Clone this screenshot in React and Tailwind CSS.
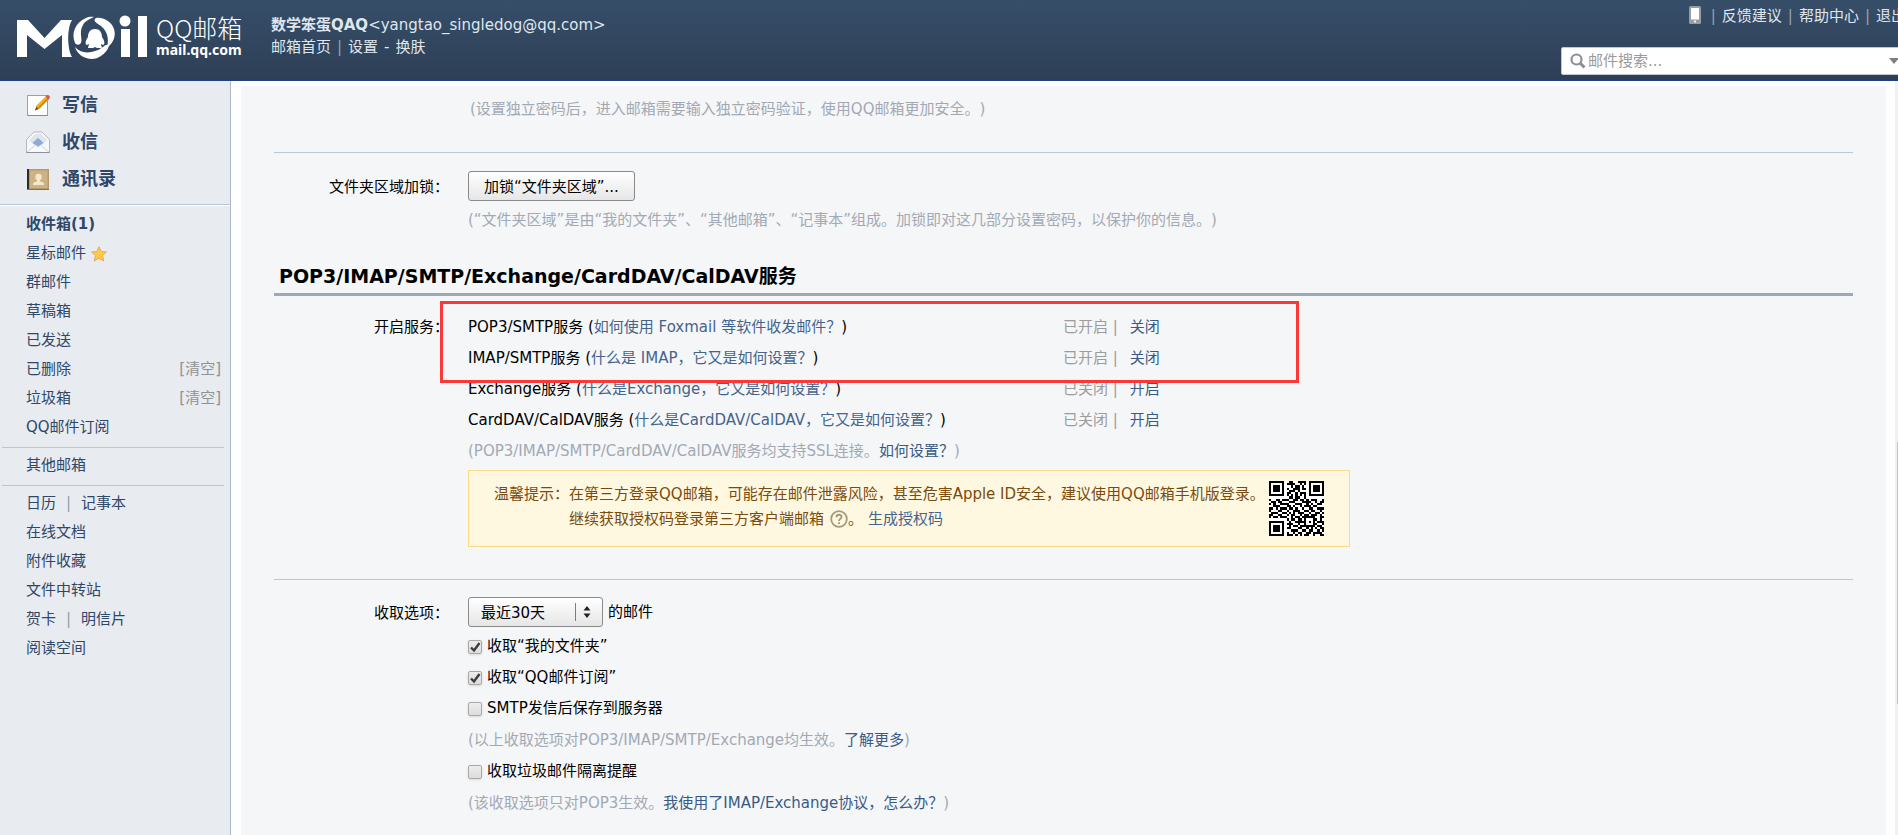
import { useState } from 'react';

const folders = [
  { name: '收件箱(1)', bold: true },
  { name: '星标邮件', star: true },
  { name: '群邮件' },
  { name: '草稿箱' },
  { name: '已发送' },
  { name: '已删除', clearable: true },
  { name: '垃圾箱', clearable: true },
  { name: 'QQ邮件订阅' }
];

const tools = [
  ['日历', '记事本'],
  ['在线文档'],
  ['附件收藏'],
  ['文件中转站'],
  ['贺卡', '明信片'],
  ['阅读空间']
];

const services = [
  { name: 'POP3/SMTP服务', help: '如何使用 Foxmail 等软件收发邮件？', on: true },
  { name: 'IMAP/SMTP服务', help: '什么是 IMAP，它又是如何设置？', on: true },
  { name: 'Exchange服务', help: '什么是Exchange，它又是如何设置？', on: false },
  { name: 'CardDAV/CalDAV服务', help: '什么是CardDAV/CalDAV，它又是如何设置？', on: false }
];

// 1 = dark module
const qrRows = [
  '1111111001100111101111111',
  '1000001011110010101000001',
  '1011101000101101001011101',
  '1011101010011101101011101',
  '1011101001110100001011101',
  '1000001011001011101000001',
  '1111111010101010101111111',
  '0000000001101100100000000',
  '1001101110011011010111001',
  '0110110001110001111001011',
  '1010011110001110010100110',
  '0011100011010010111011000',
  '1101011101101001001100111',
  '1000110010011100110110010',
  '0111001101010111001001101',
  '1100110010110010110111010',
  '1011011100101101111110011',
  '0000000010110110100011010',
  '1111111001001111101010111',
  '1000001011100100100011001',
  '1011101001011011111110110',
  '1011101011000110010101011',
  '1011101000111001101100101',
  '1000001010010110011011110',
  '1111111011101010110010011'
];

function QrCode() {
  return (
    <svg viewBox="0 0 25 25" className="h-[55px] w-[55px]" shapeRendering="crispEdges">
      <rect width="25" height="25" fill="#fff" />
      {qrRows.map((row, y) =>
        row.split('').map((cell, x) =>
          cell === '1' ? <rect key={`${x}-${y}`} x={x} y={y} width="1" height="1" fill="#000" /> : null
        )
      )}
    </svg>
  );
}

function Logo() {
  return (
    <svg viewBox="0 0 132 46" className="h-[46px] w-[132px]" fill="#fff">
      <path d="M0 6H11L27.500 24L44 6H55C50 14 50 34 55 43H45V21L27.500 35L10 21V43H0Z" />
      <path d="M69 4C58 9 54 19 58 29C59 31 62 31 63 30C67 27 61 19 66 11C68 7 73 5 77 3C74 2.500 71 3 69 4Z" />
      <path d="M79 4C75 7 80 9 84 12C91 18 92 25 90 34C97 28 99 22 97 15C94 7 86 3 79 4Z" />
      <path d="M58 33C63 39 71 40 81 36C86 34 88 30 91 31C94 33 85 45 75 45C67 45 60 40 58 33Z" />
      <path d="M78 15C72 15 71 20 71 23C68 27 68 31 70 31L72 30C72 32 70 34 72 34H76L78 33L80 34H84C86 34 84 32 84 30L86 31C88 31 88 27 85 23C85 20 84 15 78 15Z" />
      <circle cx="108" cy="7" r="5.500" />
      <rect x="104" y="15" width="9" height="28" />
      <rect x="121" y="2" width="9" height="41" />
    </svg>
  );
}

function WriteIcon() {
  return (
    <svg viewBox="0 0 24 24" className="h-6 w-6">
      <rect x="1.500" y="2.500" width="20" height="20" fill="#fdfdfd" stroke="#9aa0a6" />
      <path d="M2 22.500H21.500" stroke="#858b91" />
      <path d="M9 17.500L10.500 12.500L20 3L23 6L13.500 15.500Z" fill="#f2b21b" />
      <path d="M12 14.500L21.500 4.500L23 6L13.500 15.500Z" fill="#d08a10" />
      <path d="M9 17.500L10.300 13.500L12.800 16Z" fill="#6b5330" />
      <path d="M19.500 3.500L21 2Q22.500 1.500 23.500 3Q24.500 4.500 22.500 6.500Z" fill="#d8564e" />
    </svg>
  );
}

function InboxIcon() {
  return (
    <svg viewBox="0 0 24 24" className="h-6 w-6">
      <path d="M.5 9.500L8 2H16L23.500 9.500V22.500H.5Z" fill="#f6f8fa" stroke="#b3b8be" />
      <path d="M3 10.500L9 4H15L21 10.500L12 18Z" fill="#e0e5eb" />
      <path d="M6.500 13L9 10.500L12 8L15 10.500L17.500 13L12 16.500Z" fill="#8dabd6" />
      <path d="M1 22L9 15.500M23 22L15 15.500" stroke="#d0d5da" fill="none" />
      <path d="M.5 22.500H23.500" stroke="#8b9299" />
    </svg>
  );
}

function ContactsIcon() {
  return (
    <svg viewBox="0 0 24 24" className="h-6 w-6">
      <rect x="1" y="2" width="22" height="20.500" fill="#b79a6c" />
      <rect x="1" y="2" width="2" height="20.500" fill="#2f2a24" />
      <rect x="4" y="3.500" width="17.500" height="17.500" fill="#cdb283" />
      <circle cx="12.500" cy="10" r="3.200" fill="#f3e8cd" />
      <path d="M7 18V16.500Q7.500 15 11 14.500V12H14V14.500Q17.500 15 18 16.500V18Z" fill="#f3e8cd" />
      <path d="M1 22.500H23" stroke="#8c734b" />
    </svg>
  );
}

function Bar() {
  return <span className="text-[#98a0aa]">|</span>;
}

function SideLink({ children, className = '' }) {
  return (
    <a href="#" className={`text-[#2f4768] hover:underline ${className}`}>
      {children}
    </a>
  );
}

function FormRow({ label, htmlFor, children }) {
  return (
    <div className="flex">
      <label htmlFor={htmlFor} className="mr-[19px] w-[175px] shrink-0 text-right leading-8">
        {label}
      </label>
      <div className="min-w-0 flex-1">{children}</div>
    </div>
  );
}

function CheckRow({ id, label, defaultChecked = false }) {
  const [checked, setChecked] = useState(defaultChecked);

  return (
    <div className="flex h-[31px] items-center gap-[5px]">
      <span className="relative h-[14px] w-[14px]">
        <input
          id={id}
          type="checkbox"
          checked={checked}
          onChange={(e) => setChecked(e.target.checked)}
          className="block h-[14px] w-[14px] appearance-none rounded-[2px] border border-[#a9a9a9] bg-linear-to-b from-[#ededed] to-[#dcdcdc] shadow-sm"
        />
        {checked && (
          <svg viewBox="0 0 14 14" className="pointer-events-none absolute inset-0 h-[14px] w-[14px]">
            <path d="M3 7.500L6 10.500L11.500 3" fill="none" stroke="#3c3c3c" strokeWidth="2.400" />
          </svg>
        )}
      </span>
      <label htmlFor={id}>{label}</label>
    </div>
  );
}

function Header() {
  return (
    <header className="h-[81px] shrink-0 overflow-hidden border-b border-[#233f87] bg-linear-to-b from-[#374e69] to-[#2d3f56] text-[#dfe6ee]">
      <div className="flex w-[calc(100%+24px)] justify-between">
        <div className="flex">
          <a href="#" className="mt-[14px] ml-[17px] flex w-[254px] text-white">
            <Logo />
            <span className="ml-[7px] flex flex-col font-['Noto_Sans_CJK_SC',sans-serif]">
              <span className="text-[25px] leading-[26px] font-light">QQ邮箱</span>
              <span className="font-['Noto_Sans',sans-serif] text-sm leading-5 font-bold">mail.qq.com</span>
            </span>
          </a>
          <div className="pt-[14px] leading-[22px]">
            <div>
              <b>数学笨蛋QAQ</b>&lt;yangtao_singledog@qq.com&gt;
            </div>
            <nav className="flex gap-[6px]">
              <a href="#">邮箱首页</a>
              <Bar />
              <a href="#">设置</a>
              <span>-</span>
              <a href="#">换肤</a>
            </nav>
          </div>
        </div>
        <div className="w-[361px]">
          <nav className="mt-1 flex justify-end gap-[6px] pr-4 leading-6">
            <a href="#" aria-label="手机版" className="mt-[2px] mr-1">
              <svg viewBox="0 0 12 18" className="h-[18px] w-3">
                <rect width="12" height="18" rx="1.500" fill="#979da4" />
                <rect x="2" y="2" width="8" height="11.500" fill="#fff" />
                <circle cx="6" cy="15.500" r="1.100" fill="#fff" />
              </svg>
            </a>
            <Bar />
            <a href="#">反馈建议</a>
            <Bar />
            <a href="#">帮助中心</a>
            <Bar />
            <a href="#">退出</a>
          </nav>
          <div className="mt-[19px] flex h-7 items-center rounded-[2px] border border-[#c3c8ce] bg-white pl-2">
            <svg viewBox="0 0 16 16" className="h-4 w-4" fill="none" stroke="#8b8f93">
              <circle cx="6.500" cy="6.500" r="5" strokeWidth="2.200" />
              <path d="M10 10L14.500 14.500" strokeWidth="3" />
            </svg>
            <input
              type="text"
              aria-label="邮件搜索"
              placeholder="邮件搜索..."
              className="ml-[2px] w-[301px] text-[#333] outline-none placeholder:text-[#9a9a9a]"
            />
            <svg viewBox="0 0 10 6" className="h-[6px] w-[10px]">
              <path d="M0 0H10L5 6Z" fill="#7f7f7f" />
            </svg>
          </div>
        </div>
      </div>
    </header>
  );
}

function Sidebar() {
  return (
    <aside className="w-[231px] shrink-0 border-r border-[#adb9ca] bg-[#e8ebf0]">
      <nav className="border-b border-[#b9c4d6] pt-[5px] pb-[7px] pl-[26px] text-lg leading-[37px] font-bold">
        <div className="flex items-center gap-3">
          <WriteIcon />
          <SideLink>写信</SideLink>
        </div>
        <div className="flex items-center gap-3">
          <InboxIcon />
          <SideLink>收信</SideLink>
        </div>
        <div className="flex items-center gap-3">
          <ContactsIcon />
          <SideLink>通讯录</SideLink>
        </div>
      </nav>

      <nav className="leading-[29px]">
        <ul className="border-t border-white pt-1 pr-[9px] pb-[5px] pl-[26px]">
          {folders.map((folder) => (
            <li key={folder.name} className="flex items-center">
              <SideLink className={folder.bold ? 'font-bold' : ''}>{folder.name}</SideLink>
              {folder.star && (
                <svg viewBox="0 0 16 16" className="ml-[5px] h-4 w-4">
                  <path
                    d="M8 .8L10.200 5.600L15.400 6L11.500 9.600L12.800 15L8 12.200L3.200 15L4.500 9.600L.6 6L5.800 5.600Z"
                    fill="#fdcb45"
                    stroke="#eba55c"
                  />
                </svg>
              )}
              {folder.clearable && (
                <a href="#" className="ml-auto text-[#929292]">[清空]</a>
              )}
            </li>
          ))}
        </ul>
        <div className="mr-[6px] ml-[2px] border-y border-[#bcc6d8] pt-[3px] pb-[5px] pl-6">
          <SideLink>其他邮箱</SideLink>
        </div>
        <ul className="pt-[3px] pl-[26px]">
          {tools.map((row) => (
            <li key={row[0]} className="flex gap-[10px]">
              <SideLink>{row[0]}</SideLink>
              {row[1] && <Bar />}
              {row[1] && <SideLink>{row[1]}</SideLink>}
            </li>
          ))}
        </ul>
      </nav>
    </aside>
  );
}

function Settings() {
  return (
    <main className="mt-[5px] mr-3 ml-[10px] min-w-0 flex-1 bg-[#f4f6f8] px-[33px] pt-[11px]">
      <p className="ml-[196px] leading-6 text-[#a3a9b4]">
        (设置独立密码后，进入邮箱需要输入独立密码验证，使用QQ邮箱更加安全。)
      </p>

      <section className="mt-[31px] border-t border-[#bcc6da] pt-[18px]">
        <FormRow label="文件夹区域加锁：" htmlFor="lock">
          <button
            id="lock"
            type="button"
            className="block h-[30px] rounded-[3px] border border-[#8a8a8a] bg-linear-to-b from-white to-[#e6e6e6] px-[15px] pt-[2px]"
          >
            加锁“文件夹区域”...
          </button>
          <p className="mt-[7px] leading-6 text-[#a3a9b4]">
            (“文件夹区域”是由“我的文件夹”、“其他邮箱”、“记事本”组成。加锁即对这几部分设置密码，以保护你的信息。)
          </p>
        </FormRow>
      </section>

      <h2 className="mt-8 border-b-[3px] border-[#9fa8b5] pb-[5px] pl-[5px] text-[19px] leading-6 font-bold">
        POP3/IMAP/SMTP/Exchange/CardDAV/CalDAV服务
      </h2>

      <section className="relative pt-[15px]">
        <FormRow label="开启服务：">
          <ul className="leading-8">
            {services.map((service) => (
              <li key={service.name} className="flex h-[31px]">
                <span className="w-[595px]">
                  {service.name} (<a href="#" className="text-[#45648c]">{service.help}</a>)
                </span>
                <span className="mr-3 text-[#9c9c9c]">{service.on ? '已开启' : '已关闭'} |</span>
                <a href="#" className="text-[#3a5a86]">{service.on ? '关闭' : '开启'}</a>
              </li>
            ))}
          </ul>
          <p className="leading-8 text-[#a3a9b4]">
            (POP3/IMAP/SMTP/CardDAV/CalDAV服务均支持SSL连接。<a href="#" className="text-[#3a5a86]">如何设置？</a>)
          </p>
          <div className="mt-[3px] flex h-[77px] w-[882px] border border-[#fadb83] bg-[#fff8e1] pt-[10px] pl-[25px] text-[#7c4a0c]">
            <span className="shrink-0 leading-[26px]">温馨提示：</span>
            <div className="w-[700px]">
              <p className="leading-[26px] whitespace-nowrap">在第三方登录QQ邮箱，可能存在邮件泄露风险，甚至危害Apple ID安全，建议使用QQ邮箱手机版登录。</p>
              <p className="flex items-center leading-6">
                继续获取授权码登录第三方客户端邮箱
                <svg viewBox="0 0 18 18" className="ml-[6px] h-[18px] w-[18px]" fill="none" stroke="#a39a78">
                  <circle cx="9" cy="9" r="7.800" strokeWidth="1.800" />
                  <path d="M6.500 7.200C6.500 3.800 11.700 4 11.500 7C11.400 8.700 9 8.700 9 11" strokeWidth="1.900" />
                  <path d="M9 12.200V14" strokeWidth="2" />
                </svg>
                。
                <a href="#" className="ml-[5px] text-[#45648c]">生成授权码</a>
              </p>
            </div>
            <QrCode />
          </div>
        </FormRow>
        {/* highlighted services */}
        <div className="pointer-events-none absolute top-[5px] left-[166px] h-[82px] w-[859px] border-[3px] border-[#fb3838]" />
      </section>

      <section className="mt-8 border-t border-[#bcc6da] pt-[17px]">
        <FormRow label="收取选项：" htmlFor="range">
          <div className="flex h-[30px] items-center gap-[5px]">
            <span className="relative">
              <select
                id="range"
                className="block h-[30px] w-[135px] appearance-none rounded-[3px] border border-[#8a8a8a] bg-linear-to-b from-white to-[#e6e6e6] pt-[2px] pl-3"
              >
                <option>最近30天</option>
                <option>全部</option>
              </select>
              <svg viewBox="0 0 20 20" className="pointer-events-none absolute top-[5px] right-2 h-5 w-5">
                <path d="M.5 1V19" stroke="#7d7d7d" />
                <path d="M8.500 8.500L12 4L15.500 8.500ZM8.500 11.500L12 16L15.500 11.500Z" fill="#222" />
              </svg>
            </span>
            <span>的邮件</span>
          </div>
          <div className="mt-1">
            <CheckRow id="myfolder" label="收取“我的文件夹”" defaultChecked />
            <CheckRow id="subscribe" label="收取“QQ邮件订阅”" defaultChecked />
            <CheckRow id="savesent" label="SMTP发信后保存到服务器" />
            <p className="leading-8 text-[#a3a9b4]">
              (以上收取选项对POP3/IMAP/SMTP/Exchange均生效。<a href="#" className="text-[#3a5a86]">了解更多</a>)
            </p>
            <CheckRow id="spam" label="收取垃圾邮件隔离提醒" />
            <p className="leading-8 text-[#a3a9b4]">
              (该收取选项只对POP3生效。<a href="#" className="text-[#3a5a86]">我使用了IMAP/Exchange协议，怎么办？</a>)
            </p>
          </div>
        </FormRow>
      </section>
    </main>
  );
}

function App() {
  return (
    <div
      lang="zh-CN"
      className="flex h-screen flex-col overflow-hidden bg-white font-['DejaVu_Sans','Noto_Sans_CJK_SC',sans-serif] text-[15px] text-black [text-spacing-trim:space-all]"
    >
      <Header />
      <div className="flex min-h-0 flex-1">
        <Sidebar />
        <Settings />
        {/* edge of the scroll bar */}
        <div className="-ml-[3px] w-[3px] bg-[#f1f1f1] pt-[361px] pl-[2px]">
          <div className="h-[262px] bg-[#c1c1c1]" />
        </div>
      </div>
    </div>
  );
}

export default App;
